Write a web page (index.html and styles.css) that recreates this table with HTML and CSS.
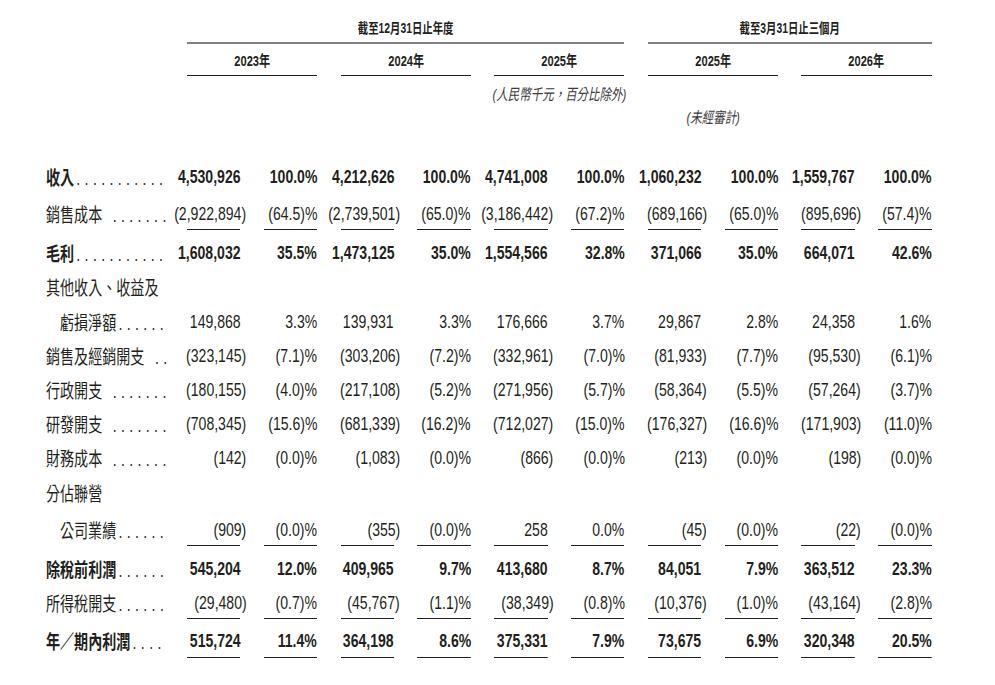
FILE: index.html
```html
<!DOCTYPE html>
<html>
<head>
<meta charset="utf-8">
<title>綜合損益表摘要</title>
<link rel="stylesheet" href="styles.css">
</head>
<body>
<div class="sheet">
	<div class="row hd">
		<div></div>
		<div class="grp g1"><span>截至12月31日止年度</span></div>
		<div class="grp g2"><span>截至3月31日止三個月</span></div>
	</div>
	<div class="row hd">
		<div></div>
		<div class="yr"><span>2023年</span></div>
		<div class="yr"><span>2024年</span></div>
		<div class="yr"><span>2025年</span></div>
		<div class="yr"><span>2025年</span></div>
		<div class="yr"><span>2026年</span></div>
	</div>
	<div class="row hd note-row">
		<div class="note c-y3"><span>(人民幣千元，百分比除外)</span></div>
	</div>
	<div class="row hd">
		<div class="note c-y4"><span>(未經審計)</span></div>
	</div>

	<div class="row b first">
		<div class="lbl"><span>收入<i class="dots">...........</i></span></div>
		<div class="n"><span>4,530,926</span></div><div class="n"><span>100.0%</span></div>
		<div class="n"><span>4,212,626</span></div><div class="n"><span>100.0%</span></div>
		<div class="n"><span>4,741,008</span></div><div class="n"><span>100.0%</span></div>
		<div class="n"><span>1,060,232</span></div><div class="n"><span>100.0%</span></div>
		<div class="n"><span>1,559,767</span></div><div class="n"><span>100.0%</span></div>
	</div>
	<div class="row ul">
		<div class="lbl"><span>銷售成本<i class="dots"> .......</i></span></div>
		<div class="n"><span>(2,922,894<b class="rp">)</b></span></div><div class="n"><span>(64.5)%</span></div>
		<div class="n"><span>(2,739,501<b class="rp">)</b></span></div><div class="n"><span>(65.0)%</span></div>
		<div class="n"><span>(3,186,442<b class="rp">)</b></span></div><div class="n"><span>(67.2)%</span></div>
		<div class="n"><span>(689,166<b class="rp">)</b></span></div><div class="n"><span>(65.0)%</span></div>
		<div class="n"><span>(895,696<b class="rp">)</b></span></div><div class="n"><span>(57.4)%</span></div>
	</div>
	<div class="row b">
		<div class="lbl"><span>毛利<i class="dots">...........</i></span></div>
		<div class="n"><span>1,608,032</span></div><div class="n"><span>35.5%</span></div>
		<div class="n"><span>1,473,125</span></div><div class="n"><span>35.0%</span></div>
		<div class="n"><span>1,554,566</span></div><div class="n"><span>32.8%</span></div>
		<div class="n"><span>371,066</span></div><div class="n"><span>35.0%</span></div>
		<div class="n"><span>664,071</span></div><div class="n"><span>42.6%</span></div>
	</div>
	<div class="row">
		<div class="lbl wide"><span>其他收入、收益及</span></div>
	</div>
	<div class="row">
		<div class="lbl ind"><span>虧損淨額<i class="dots">......</i></span></div>
		<div class="n"><span>149,868</span></div><div class="n"><span>3.3%</span></div>
		<div class="n"><span>139,931</span></div><div class="n"><span>3.3%</span></div>
		<div class="n"><span>176,666</span></div><div class="n"><span>3.7%</span></div>
		<div class="n"><span>29,867</span></div><div class="n"><span>2.8%</span></div>
		<div class="n"><span>24,358</span></div><div class="n"><span>1.6%</span></div>
	</div>
	<div class="row">
		<div class="lbl"><span>銷售及經銷開支<i class="dots"> ..</i></span></div>
		<div class="n"><span>(323,145<b class="rp">)</b></span></div><div class="n"><span>(7.1)%</span></div>
		<div class="n"><span>(303,206<b class="rp">)</b></span></div><div class="n"><span>(7.2)%</span></div>
		<div class="n"><span>(332,961<b class="rp">)</b></span></div><div class="n"><span>(7.0)%</span></div>
		<div class="n"><span>(81,933<b class="rp">)</b></span></div><div class="n"><span>(7.7)%</span></div>
		<div class="n"><span>(95,530<b class="rp">)</b></span></div><div class="n"><span>(6.1)%</span></div>
	</div>
	<div class="row">
		<div class="lbl"><span>行政開支<i class="dots"> .......</i></span></div>
		<div class="n"><span>(180,155<b class="rp">)</b></span></div><div class="n"><span>(4.0)%</span></div>
		<div class="n"><span>(217,108<b class="rp">)</b></span></div><div class="n"><span>(5.2)%</span></div>
		<div class="n"><span>(271,956<b class="rp">)</b></span></div><div class="n"><span>(5.7)%</span></div>
		<div class="n"><span>(58,364<b class="rp">)</b></span></div><div class="n"><span>(5.5)%</span></div>
		<div class="n"><span>(57,264<b class="rp">)</b></span></div><div class="n"><span>(3.7)%</span></div>
	</div>
	<div class="row">
		<div class="lbl"><span>研發開支<i class="dots"> .......</i></span></div>
		<div class="n"><span>(708,345<b class="rp">)</b></span></div><div class="n"><span>(15.6)%</span></div>
		<div class="n"><span>(681,339<b class="rp">)</b></span></div><div class="n"><span>(16.2)%</span></div>
		<div class="n"><span>(712,027<b class="rp">)</b></span></div><div class="n"><span>(15.0)%</span></div>
		<div class="n"><span>(176,327<b class="rp">)</b></span></div><div class="n"><span>(16.6)%</span></div>
		<div class="n"><span>(171,903<b class="rp">)</b></span></div><div class="n"><span>(11.0)%</span></div>
	</div>
	<div class="row">
		<div class="lbl"><span>財務成本<i class="dots"> .......</i></span></div>
		<div class="n"><span>(142<b class="rp">)</b></span></div><div class="n"><span>(0.0)%</span></div>
		<div class="n"><span>(1,083<b class="rp">)</b></span></div><div class="n"><span>(0.0)%</span></div>
		<div class="n"><span>(866<b class="rp">)</b></span></div><div class="n"><span>(0.0)%</span></div>
		<div class="n"><span>(213<b class="rp">)</b></span></div><div class="n"><span>(0.0)%</span></div>
		<div class="n"><span>(198<b class="rp">)</b></span></div><div class="n"><span>(0.0)%</span></div>
	</div>
	<div class="row">
		<div class="lbl"><span>分佔聯營</span></div>
	</div>
	<div class="row ul">
		<div class="lbl ind"><span>公司業績<i class="dots">......</i></span></div>
		<div class="n"><span>(909<b class="rp">)</b></span></div><div class="n"><span>(0.0)%</span></div>
		<div class="n"><span>(355<b class="rp">)</b></span></div><div class="n"><span>(0.0)%</span></div>
		<div class="n"><span>258</span></div><div class="n"><span>0.0%</span></div>
		<div class="n"><span>(45<b class="rp">)</b></span></div><div class="n"><span>(0.0)%</span></div>
		<div class="n"><span>(22<b class="rp">)</b></span></div><div class="n"><span>(0.0)%</span></div>
	</div>
	<div class="row b">
		<div class="lbl"><span>除稅前利潤<i class="dots">......</i></span></div>
		<div class="n"><span>545,204</span></div><div class="n"><span>12.0%</span></div>
		<div class="n"><span>409,965</span></div><div class="n"><span>9.7%</span></div>
		<div class="n"><span>413,680</span></div><div class="n"><span>8.7%</span></div>
		<div class="n"><span>84,051</span></div><div class="n"><span>7.9%</span></div>
		<div class="n"><span>363,512</span></div><div class="n"><span>23.3%</span></div>
	</div>
	<div class="row ul last-ul">
		<div class="lbl"><span>所得稅開支<i class="dots">......</i></span></div>
		<div class="n"><span>(29,480<b class="rp">)</b></span></div><div class="n"><span>(0.7)%</span></div>
		<div class="n"><span>(45,767<b class="rp">)</b></span></div><div class="n"><span>(1.1)%</span></div>
		<div class="n"><span>(38,349<b class="rp">)</b></span></div><div class="n"><span>(0.8)%</span></div>
		<div class="n"><span>(10,376<b class="rp">)</b></span></div><div class="n"><span>(1.0)%</span></div>
		<div class="n"><span>(43,164<b class="rp">)</b></span></div><div class="n"><span>(2.8)%</span></div>
	</div>
	<div class="row b tot">
		<div class="lbl"><span>年／期內利潤<i class="dots">....</i></span></div>
		<div class="n"><span>515,724</span></div><div class="n"><span>11.4%</span></div>
		<div class="n"><span>364,198</span></div><div class="n"><span>8.6%</span></div>
		<div class="n"><span>375,331</span></div><div class="n"><span>7.9%</span></div>
		<div class="n"><span>73,675</span></div><div class="n"><span>6.9%</span></div>
		<div class="n"><span>320,348</span></div><div class="n"><span>20.5%</span></div>
	</div>
</div>
</body>
</html>
```

FILE: styles.css
```css
body {
	margin: 0;
	background: #fff;
	color: #231f20;
	font-family: "Liberation Sans", "Noto Sans CJK TC", sans-serif;
	font-size: 19px;
}
.sheet { padding: 14px 0 0 46px; }

.row {
	display: grid;
	grid-template-columns: 117.7px repeat(10, 53.5px);
	column-gap: 23.3px;
	height: 34.2px;
	align-items: start;
	line-height: 34.2px;
}
.row.hd { height: auto; line-height: normal; }
.row.first { margin-top: 31px; }
.row.b { font-weight: bold; }

/* the printed statement uses condensed type */
.row span {
	display: inline-block;
	white-space: nowrap;
	transform: scaleX(.74);
}
.n > span { transform-origin: 100% 50%; }
.lbl > span { transform-origin: 0 50%; }

/* header */
.grp {
	grid-column: span 6;
	display: flex;
	justify-content: center;
	font-weight: bold;
	font-size: 14px;
	line-height: 28px;
	border-bottom: 2px solid #808080;
}
.grp.g2 { grid-column: span 4; }
.yr {
	grid-column: span 2;
	display: flex;
	justify-content: center;
	font-weight: bold;
	font-size: 15px;
	line-height: 29px;
	margin-top: 2px;
	border-bottom: 1px solid #231f20;
}
.note {
	display: flex;
	justify-content: center;
	font-size: 15.5px;
	font-style: italic;
	line-height: 22px;
	color: #3c3a3b;
}
.note-row { margin-top: 8px; }
.c-y3 { grid-column: 6 / span 2; }
.c-y4 { grid-column: 8 / span 2; margin-top: 1px; }

/* labels */
.lbl {
	display: flex;
	font-family: "Noto Sans CJK TC", sans-serif;
}
.lbl.ind { padding-left: 14px; }
.lbl.wide { grid-column: span 3; }
.dots {
	font-family: "Liberation Sans", sans-serif;
	font-style: normal;
	font-weight: normal;
	letter-spacing: 5.9px;
	margin-left: 3px;
}

/* numbers */
.n {
	display: flex;
	justify-content: flex-end;
}
.rp { font-weight: inherit; margin-right: -8px; }

.row.ul { height: 42px; }
.row.ul > div { line-height: 31px; margin-top: 4px; }
.row.ul > .n { border-bottom: 1px solid #231f20; }
.row.ul.last-ul { height: 38px; }
.row.ul.last-ul > div { margin-top: 1px; }

.row.tot > .n {
	line-height: 34px;
	padding-bottom: 5px;
	border-bottom: 1px solid #231f20;
	background: linear-gradient(#231f20, #231f20) bottom / 100% 1px no-repeat;
	background-origin: content-box;
}
```
